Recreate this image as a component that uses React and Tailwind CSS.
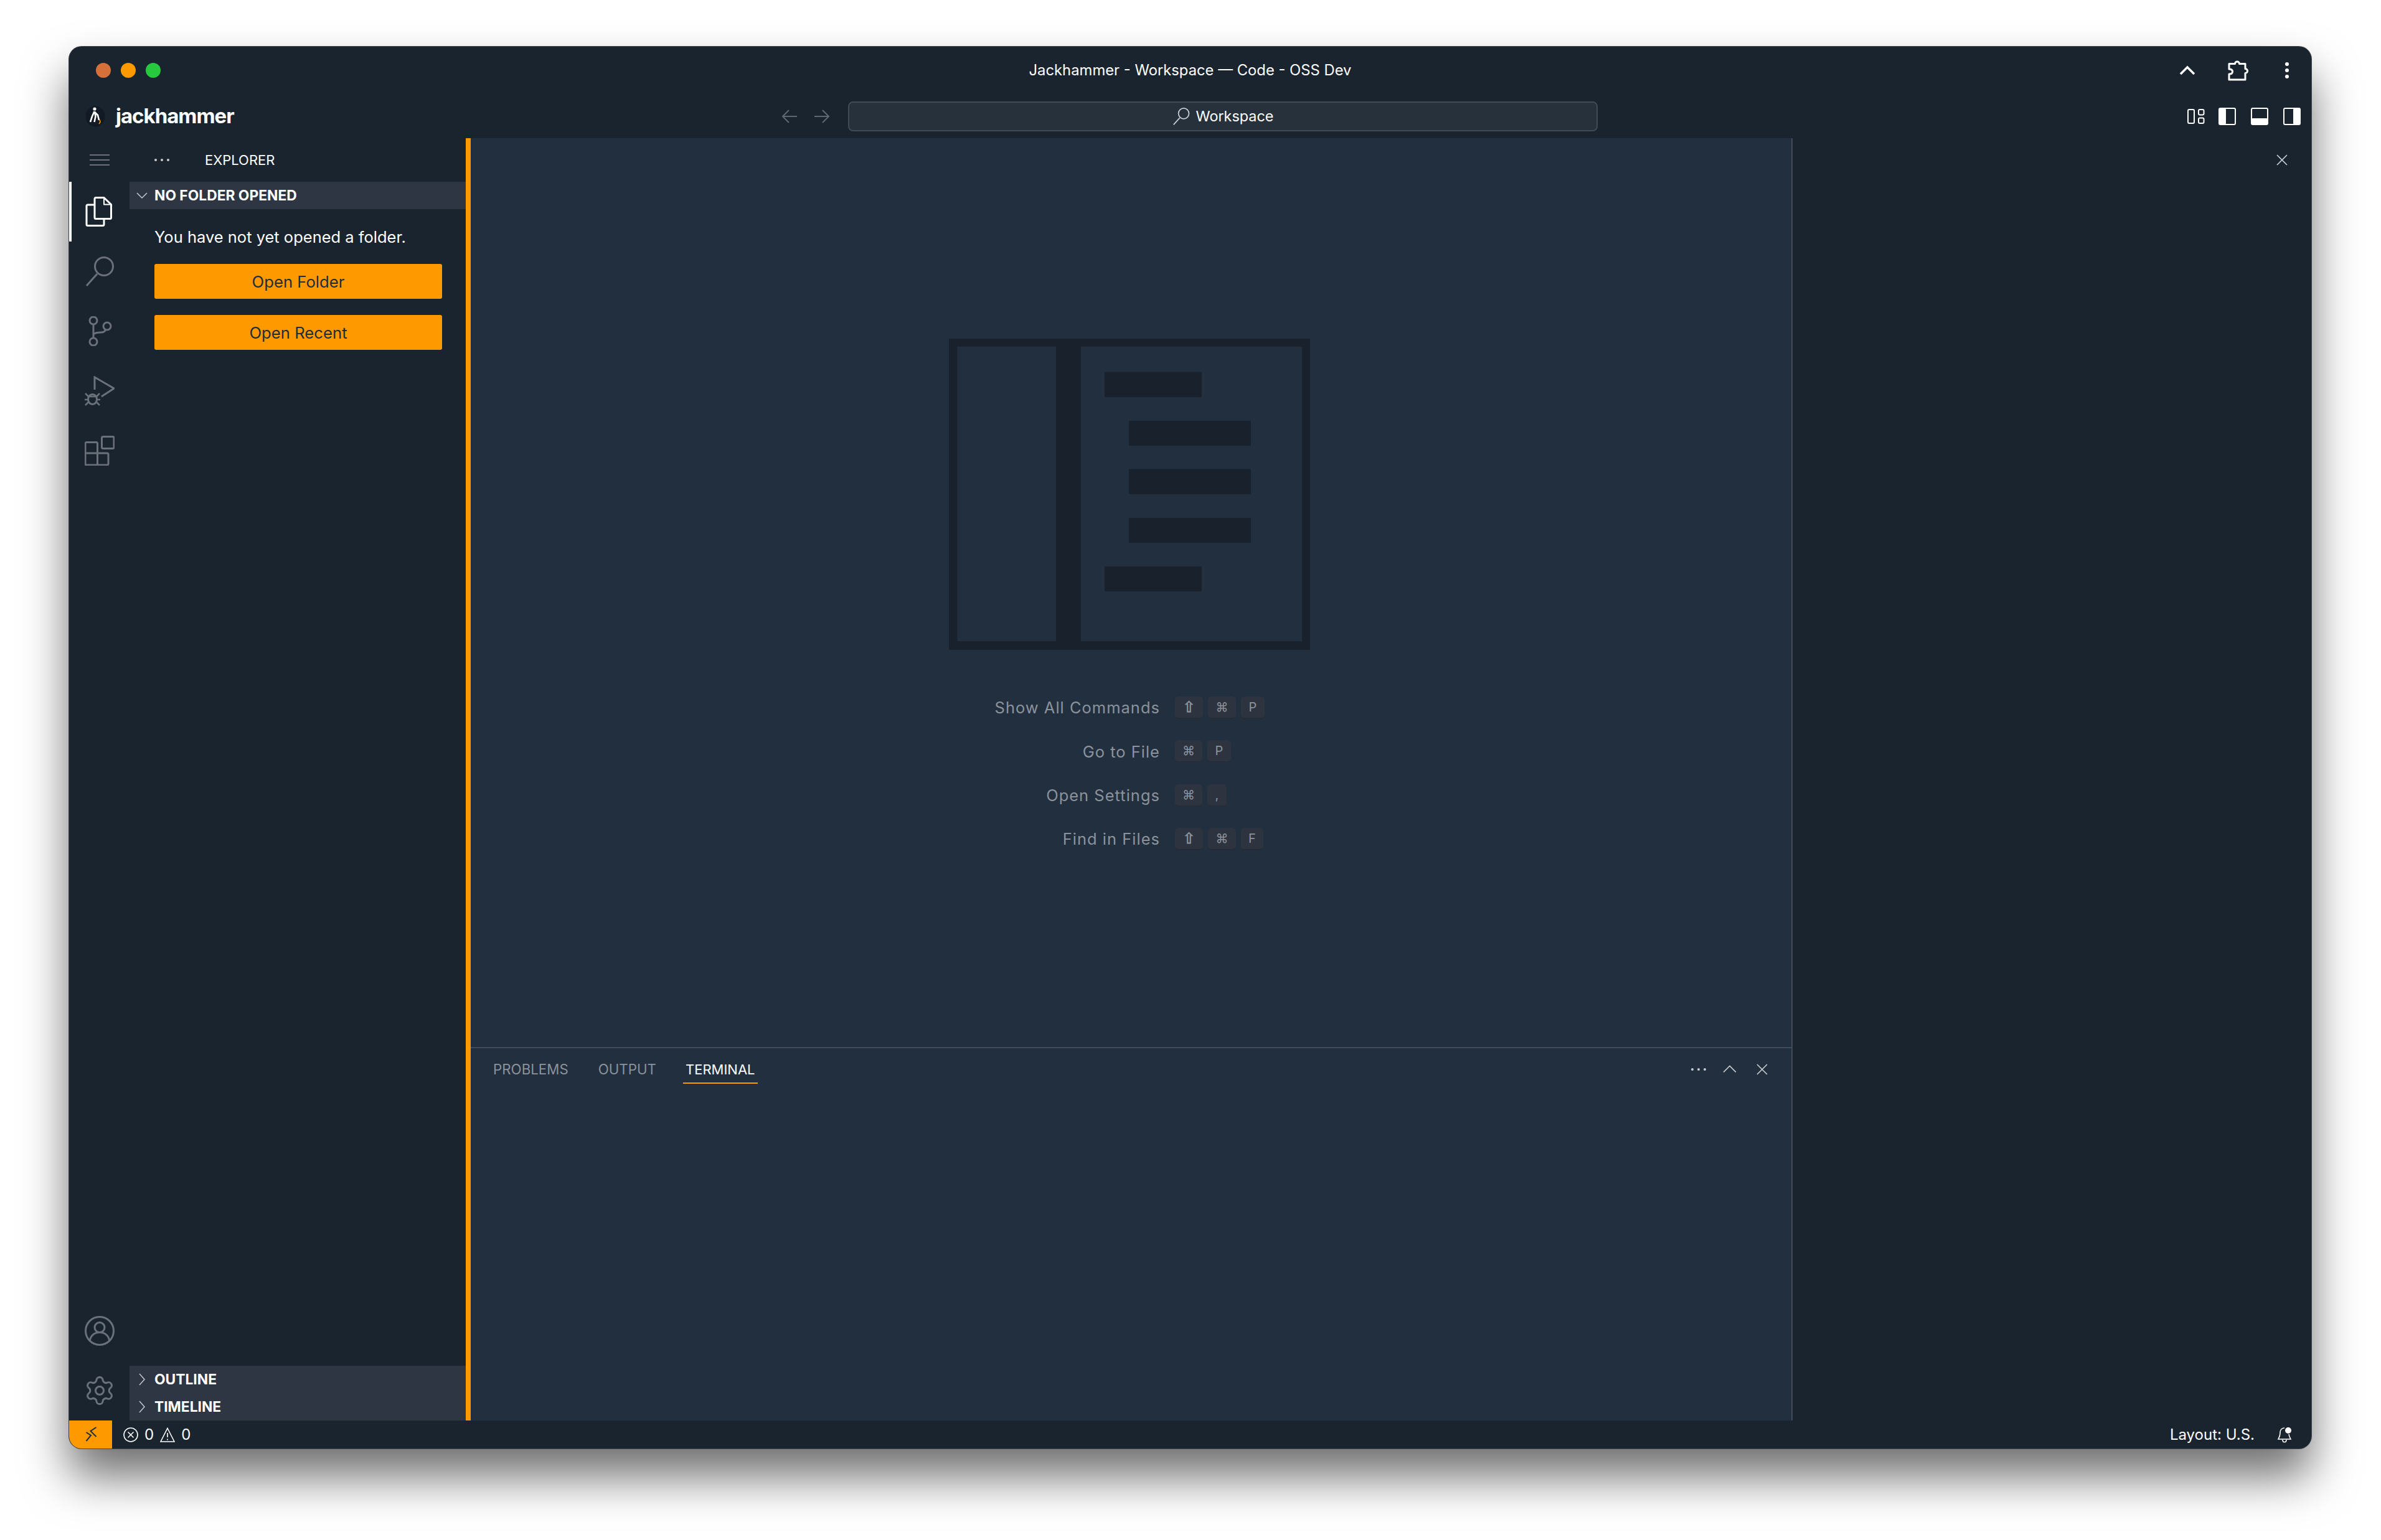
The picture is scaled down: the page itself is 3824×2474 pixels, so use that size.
import { Settings } from "lucide-react";

const SHORTCUTS = [
  { label: "Show All Commands", keys: [["⇧", "w-[45px]"], ["⌘", "w-[45px]"], ["P", "w-[38px]"]] },
  { label: "Go to File", keys: [["⌘", "w-[44px]"], ["P", "w-[38px]"]] },
  { label: "Open Settings", keys: [["⌘", "w-[44px]"], [",", "w-[31px]"]] },
  { label: "Find in Files", keys: [["⇧", "w-[45px]"], ["⌘", "w-[45px]"], ["F", "w-[36px]"]] },
];

function Logo() {
  return (
    <svg width="32" height="34" viewBox="0 0 32 34">
      <ellipse cx="16" cy="17" rx="15.5" ry="16.5" fill="#111a25" />
      <circle cx="15" cy="5" r="2.6" fill="#fff" />
      <path d="M14.5 9 11 17l-3 9M15 9l1.5 8-2 9M15 10l5 5 2 8" fill="none" stroke="#fff" strokeWidth="2.6" />
      <path d="M23 22l1 4-2 3" fill="none" stroke="#ff9900" strokeWidth="1.5" />
    </svg>
  );
}

function FilesIcon() {
  return (
    <svg width="48" height="48" viewBox="0 0 48 48" fill="none" stroke="#fff" strokeWidth="3" strokeLinejoin="round">
      <path d="M16 3.5a2 2 0 0 1 2-2h13l11.5 11v21a2 2 0 0 1-2 2H18a2 2 0 0 1-2-2z" />
      <path d="M31 1.5v11h11.5" strokeWidth="2" />
      <path d="M16 13H5a2 2 0 0 0-2 2v29.5a2 2 0 0 0 2 2h24a2 2 0 0 0 2-2V36" />
    </svg>
  );
}

function SearchIcon({ size = 48, stroke = "#6a717a", width = 3 }) {
  return (
    <svg width={size} height={size} viewBox="0 0 48 48" fill="none" stroke={stroke} strokeWidth={width}>
      <circle cx="31" cy="16" r="14.5" />
      <path d="M20 28 3 47" />
    </svg>
  );
}

function ScmIcon() {
  return (
    <svg width="48" height="48" viewBox="0 0 48 48" fill="none" stroke="#6a717a" strokeWidth="3">
      <circle cx="14" cy="7" r="6" />
      <circle cx="14" cy="41" r="6" />
      <circle cx="36" cy="16" r="6" />
      <path d="M14 13v22M14 29c3-3 8-3 12-3 4 0 7-2 8-5" />
    </svg>
  );
}

function DebugIcon() {
  return (
    <svg width="48" height="48" viewBox="0 0 48 48" fill="none" stroke="#6a717a" strokeWidth="3">
      <path d="M16 22V2l31 18-20 13" />
      <ellipse cx="12.500" cy="37.500" rx="7" ry="8" />
      <path d="M6 33h13M6 33l-5-5M19 33l5-5M5 38H0M20 38h5M6 42l-5 5M19 42l5 5" strokeWidth="2.500" />
    </svg>
  );
}

function ExtensionsIcon() {
  return (
    <svg width="48" height="48" viewBox="0 0 48 48" fill="none" stroke="#6a717a" strokeWidth="3" strokeLinejoin="round">
      <rect x="27.5" y="1.5" width="19.5" height="19" rx="2" />
      <path d="M3 10.5h15.5a2 2 0 0 1 2 2v15.5H36a2 2 0 0 1 2 2V45a2 2 0 0 1-2 2H3a2 2 0 0 1-2-2V12.5a2 2 0 0 1 2-2zM1 28h19.500v19" />
    </svg>
  );
}

function AccountIcon() {
  return (
    <svg width="48" height="48" viewBox="0 0 48 48" fill="none" stroke="#6a717a" strokeWidth="3">
      <circle cx="24" cy="24" r="22.500" />
      <circle cx="24" cy="18.500" r="8" />
      <path d="M8.500 39c1-7 7-12.500 15.500-12.500S38.500 32 39.500 39" />
    </svg>
  );
}

function Chevron({ dir, color = "#c5c9cf", size = 20 }) {
  const d = { down: "M2 6l8 8 8-8", right: "M6 1l8 9-8 9", up: "M1 14l9-9 9 9" }[dir];
  return (
    <svg width={size} height={size} viewBox="0 0 20 20" fill="none" stroke={color} strokeWidth="1.500">
      <path d={d} />
    </svg>
  );
}

function Close({ color = "#c8ccd1" }) {
  return (
    <svg width="18" height="18" viewBox="0 0 18 18" fill="none" stroke={color} strokeWidth="1.700">
      <path d="M1 1l16 16M17 1 1 17" />
    </svg>
  );
}

function Dots({ color = "#c8ccd1" }) {
  return (
    <svg width="24" height="6" viewBox="0 0 24 6" fill={color}>
      <circle cx="2" cy="3" r="2" />
      <circle cx="12" cy="3" r="2" />
      <circle cx="22" cy="3" r="2" />
    </svg>
  );
}

function Arrow({ flip }) {
  return (
    <svg width="26" height="22" viewBox="0 0 26 22" fill="none" stroke="#5f6873" strokeWidth="2" className={flip ? "-scale-x-100" : ""}>
      <path d="M12 1 2 11l10 10M2 11h23" />
    </svg>
  );
}

function SectionHeader({ open, label, h = "h-[44px]" }) {
  return (
    <div className={`${h} flex items-center bg-[#2e3643]`}>
      <div className="flex w-[40px] justify-center">
        <Chevron dir={open ? "down" : "right"} />
      </div>
      <span className="text-[22.8px] font-bold leading-none text-white">{label}</span>
    </div>
  );
}

export default function App() {
  return (
    <div className="h-[2474px] w-[3824px] overflow-hidden bg-white pl-[111px] pt-[75px] font-[Inter,sans-serif]">
      <div className="flex h-[2252px] w-[3601px] flex-col overflow-hidden rounded-[20px] bg-[#1a242f] shadow-[0_0_0_1px_#3a4149,0_45px_75px_rgba(0,0,0,0.57)]">

        {/* title bar */}
        <div className="grid h-[76px] shrink-0 grid-cols-[1fr_auto_1fr] items-center">
          <div className="flex gap-[16px] pl-[43px]">
            <span className="h-[24px] w-[24px] rounded-full bg-[#d6703b]" />
            <span className="h-[24px] w-[24px] rounded-full bg-[#ff9900]" />
            <span className="h-[24px] w-[24px] rounded-full bg-[#28c83e]" />
          </div>
          <div className="text-[23.8px] leading-none text-white">Jackhammer - Workspace — Code - OSS Dev</div>
          <div className="flex items-center justify-end gap-[51px] pr-[35px]">
            <svg width="26" height="16" viewBox="0 0 26 16" fill="none" stroke="#fff" strokeWidth="3.500">
              <path d="M2 14 13 3l11 11" />
            </svg>
            <svg width="36" height="36" viewBox="0 0 36 36" fill="none" stroke="#fff" strokeWidth="3" strokeLinejoin="round">
              <path d="M3 7.500h9.500a3.500 3.500 0 0 1 7 0h9.500v8a3.500 3.500 0 0 1 0 7V33H3v-9c4 0 5.500-2 5.500-4S7 16 3 16z" />
            </svg>
            <svg width="8" height="28" viewBox="0 0 8 28" fill="#fff" className="ml-[5px]">
              <circle cx="4" cy="4" r="3" />
              <circle cx="4" cy="14" r="3" />
              <circle cx="4" cy="24" r="3" />
            </svg>
          </div>
        </div>

        {/* logo + command center row */}
        <div className="flex h-[71px] shrink-0 items-center">
          <div className="flex w-[1144px] items-center gap-[17px] pl-[26px]">
            <Logo />
            <span className="text-[33px] font-bold leading-none tracking-[-1px] text-white">jackhammer</span>
          </div>
          <div className="flex w-[107px] gap-[26px]">
            <Arrow />
            <Arrow flip />
          </div>
          <div className="flex h-[48px] w-[1204px] items-center justify-center gap-[10px] rounded-[8px] border-2 border-[#414a55] bg-[#27313c]">
            <SearchIcon size={28} stroke="#c8ccd1" width={3} />
            <span className="text-[23.4px] leading-none text-white">Workspace</span>
          </div>
          <div className="ml-auto flex items-center gap-[24px] pr-[17px]">
            <svg width="28" height="26" viewBox="0 0 28 26" fill="none" stroke="#fff" strokeWidth="2" className="mr-[-2px]">
              <rect x="1" y="2" width="10" height="22" rx="2" />
              <rect x="18" y="2" width="8.500" height="8.500" rx="2" />
              <rect x="18" y="15.500" width="8.500" height="8.500" rx="2" />
            </svg>
            <svg width="28" height="28" viewBox="0 0 28 28">
              <rect x="1" y="1" width="26" height="26" rx="2" fill="none" stroke="#fff" strokeWidth="2" />
              <rect x="1" y="1" width="11" height="26" rx="2" fill="#fff" />
            </svg>
            <svg width="28" height="28" viewBox="0 0 28 28">
              <rect x="1" y="1" width="26" height="26" rx="2" fill="none" stroke="#fff" strokeWidth="2" />
              <rect x="1" y="17" width="26" height="10" rx="2" fill="#fff" />
            </svg>
            <svg width="28" height="28" viewBox="0 0 28 28">
              <rect x="1" y="1" width="26" height="26" rx="2" fill="none" stroke="#fff" strokeWidth="2" />
              <rect x="16" y="1" width="11" height="26" rx="2" fill="#fff" />
            </svg>
          </div>
        </div>

        <div className="flex min-h-0 flex-1">

          {/* activity bar */}
          <div className="flex w-[97px] shrink-0 flex-col">
            <div className="flex h-[70px] items-center justify-center">
              <svg width="32" height="20" viewBox="0 0 32 20" stroke="#6a717a" strokeWidth="2">
                <path d="M0 2h32M0 10h32M0 18h32" />
              </svg>
            </div>
            <div className="flex h-[96px] items-center justify-center border-l-4 border-white pr-[4px]">
              <FilesIcon />
            </div>
            <div className="flex h-[96px] items-center justify-center"><SearchIcon /></div>
            <div className="flex h-[96px] items-center justify-center"><ScmIcon /></div>
            <div className="flex h-[96px] items-center justify-center"><DebugIcon /></div>
            <div className="flex h-[96px] items-center justify-center"><ExtensionsIcon /></div>
            <div className="mt-auto flex h-[96px] items-center justify-center"><AccountIcon /></div>
            <div className="flex h-[96px] items-center justify-center">
              <Settings size={52} strokeWidth={1.4} color="#6a717a" />
            </div>
          </div>

          {/* sidebar */}
          <div className="flex w-[548px] shrink-0 flex-col border-r-8 border-[#ff9900]">
            <div className="flex h-[70px] items-center pl-[40px]">
              <Dots />
              <span className="ml-[57px] text-[22px] leading-none text-white">EXPLORER</span>
            </div>
            <SectionHeader open label="NO FOLDER OPENED" />
            <div className="flex flex-1 flex-col pl-[40px] pr-[38px] pt-[27px]">
              <p className="text-[25.5px] leading-[36px] text-white">You have not yet opened a folder.</p>
              <button className="mt-[25px] h-[56px] rounded-[3px] bg-[#ff9900] pt-[2px] text-[25.7px] text-[#1f2d3f]">Open Folder</button>
              <button className="mt-[26px] h-[56px] rounded-[3px] bg-[#ff9900] pt-[2px] text-[25.7px] text-[#1f2d3f]">Open Recent</button>
            </div>
            <SectionHeader label="OUTLINE" />
            <SectionHeader label="TIMELINE" />
          </div>

          {/* editor + panel */}
          <div className="flex w-[2123px] shrink-0 flex-col border-r-2 border-[#424b57] bg-[#222f3e]">
            <div className="flex h-[1460px] shrink-0 flex-col pt-[322px]">
              <div className="flex justify-center pr-[5px]">
                <svg width="580" height="500" viewBox="0 0 580 500" fill="#19212d">
                  <path fillRule="evenodd" d="M0 0h580v500H0zM13.500 13v473H172V13zM212 13v473h355V13z" />
                  <rect x="250" y="53.500" width="156" height="40.500" />
                  <rect x="289" y="132" width="196" height="40" />
                  <rect x="289" y="209.500" width="196" height="40.500" />
                  <rect x="289" y="288" width="196" height="40" />
                  <rect x="250" y="366" width="156" height="40" />
                </svg>
              </div>
              <div className="mt-[58px] flex flex-col">
                {SHORTCUTS.map((row) => (
                  <div key={row.label} className="flex h-[70.3px] items-center gap-[24px]">
                    <div className="w-[1107px] text-right text-[25.5px] leading-none tracking-[1px] text-[#8b929c]">{row.label}</div>
                    <div className="flex gap-[8px]">
                      {row.keys.map(([k, w]) => (
                        <span
                          key={k}
                          className={`${w} flex h-[36px] items-center justify-center rounded-[6px] border-b-2 border-[#262c37] bg-[#2d3440] leading-none text-[#8b929c] ${
                            k === "⇧"
                              ? "text-[24px] font-[DejaVu_Sans,sans-serif] [-webkit-text-stroke:0.8px_#8b929c]"
                              : "text-[20px]"
                          }`}
                        >
                          {k}
                        </span>
                      ))}
                    </div>
                  </div>
                ))}
              </div>
            </div>

            <div className="flex flex-1 flex-col border-t-2 border-[#424b57]">
              <div className="flex items-start pl-[36px] pr-[38px] pt-[19px]">
                <span className="h-[38px] text-[22.3px] leading-[30px] text-[#8b929c]">PROBLEMS</span>
                <span className="ml-[48px] h-[38px] text-[22.3px] leading-[30px] text-[#8b929c]">OUTPUT</span>
                <span className="ml-[43px] h-[38px] border-b-2 border-[#ff9900] px-[4px] text-[22px] leading-[30px] text-white">TERMINAL</span>
                <div className="ml-auto flex h-[30px] items-center">
                  <Dots />
                  <span className="ml-[27px]"><Chevron dir="up" size={22} color="#c8ccd1" /></span>
                  <span className="ml-[32px]"><Close /></span>
                </div>
              </div>
            </div>
          </div>

          {/* aux sidebar */}
          <div className="flex flex-1 justify-end pr-[38px] pt-[26px]">
            <Close />
          </div>
        </div>

        {/* status bar */}
        <div className="flex h-[45px] shrink-0 items-center text-[24px] leading-none text-white">
          <div className="flex h-full w-[69px] items-center justify-center bg-[#ff9900]">
            <svg width="20" height="28" viewBox="0 0 20 28" fill="none" stroke="#1f2d3f" strokeWidth="2">
              <path d="M2.500 10l7.500 5-7.500 9M18.500 2 9.500 8l9 9" />
            </svg>
          </div>
          <div className="ml-[18px] flex items-center gap-[10px]">
            <svg width="24" height="24" viewBox="0 0 24 24" fill="none" stroke="#fff" strokeWidth="1.600">
              <circle cx="12" cy="12" r="11" />
              <path d="m7.500 7.500 9 9M16.500 7.500l-9 9" />
            </svg>
            <span>0</span>
            <svg width="24" height="24" viewBox="0 0 24 24" fill="none" stroke="#fff" strokeWidth="1.600">
              <path d="M12 1.500 23 23H1zM12 9v7M12 18.500v2" />
            </svg>
            <span>0</span>
          </div>
          <span className="ml-auto">Layout: U.S.</span>
          <svg width="24" height="26" viewBox="0 0 24 26" fill="none" stroke="#fff" strokeWidth="1.600" className="ml-[36px] mr-[31px]">
            <path d="M12 2C7 2 5 6 5 10c0 5-2 8-3 10h20c-1-2-2.500-4-3-8M9 21c0 5 6 5 6 0" />
            <circle cx="18" cy="6" r="5" fill="#fff" stroke="none" />
          </svg>
        </div>
      </div>
    </div>
  );
}
